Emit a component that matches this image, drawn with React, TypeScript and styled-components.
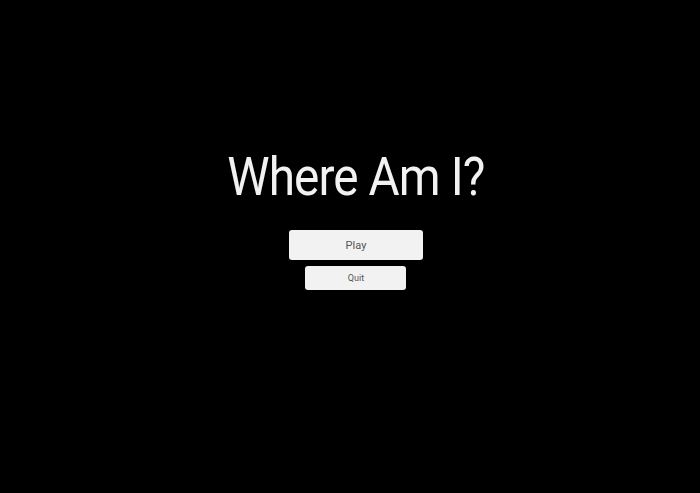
import { createGlobalStyle } from "styled-components";
import styled from "styled-components";

const GlobalStyle = createGlobalStyle`
  html, body, #root {
    margin: 0;
    padding: 0;
    height: 100%;
    background: #000000;
  }
  body {
    font-family: Roboto, "Liberation Sans", sans-serif;
  }
`;

export default function App() {
  return (
    <>
      <GlobalStyle />
      <Screen>
        <Menu>
          <Title>Where Am I?</Title>
          <MenuButton $width={134} $height={30} $size={11}>Play</MenuButton>
          <MenuButton $width={101} $height={24} $size={9}>Quit</MenuButton>
        </Menu>
      </Screen>
    </>
  );
}

const Screen = styled.div`
  width: 100%;
  height: 100%;
  display: flex;
  justify-content: center;
  padding-left: 12px;
  box-sizing: border-box;
  background: #000000;
`;

const Menu = styled.div`
  display: flex;
  flex-direction: column;
  align-items: center;
  padding-top: 141px;
`;

const Title = styled.div`
  color: #f2f2f2;
  font-size: 53px;
  line-height: 72px;
  letter-spacing: -1px;
  margin-bottom: 17px;
  transform: scaleX(0.9);
`;

const MenuButton = styled.button<{ $width: number; $height: number; $size: number }>`
  width: ${(p) => p.$width}px;
  height: ${(p) => p.$height}px;
  font-size: ${(p) => p.$size}px;
  font-family: Roboto, "Liberation Sans", sans-serif;
  color: #555555;
  background: #f2f2f2;
  border: none;
  border-radius: 3px;
  padding: 0;
  margin-bottom: 6px;
  cursor: pointer;
`;
